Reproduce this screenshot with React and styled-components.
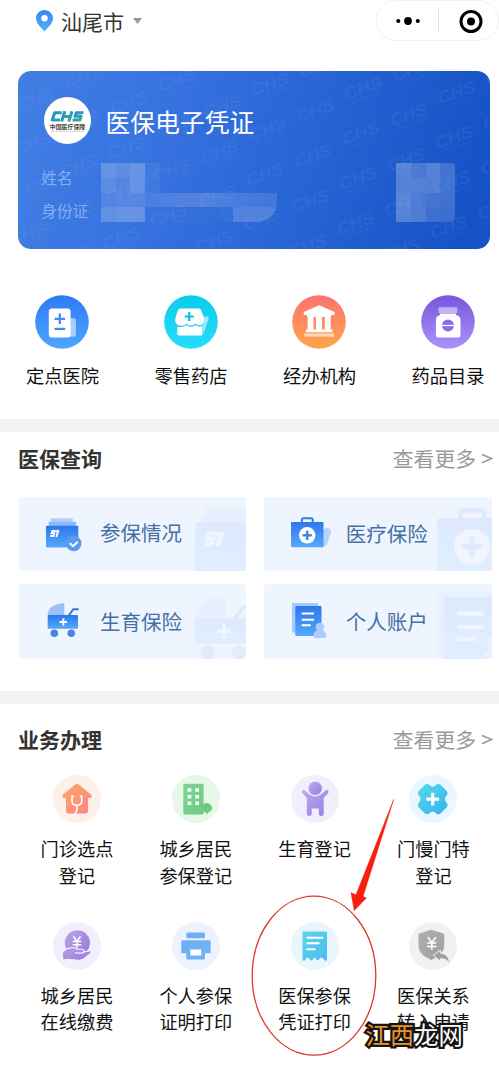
import React from 'react';
import styled, { createGlobalStyle } from 'styled-components';

const GlobalStyle = createGlobalStyle`
  * { box-sizing: border-box; }
  body {
    margin: 0;
    background: #fff;
    font-family: "Noto Sans CJK SC", "Liberation Sans", sans-serif;
    color: #111;
    overflow: hidden;
  }
  svg { display: block; }
`;

const Page = styled.main`
  position: relative;
  width: 499px;
  height: 1065px;
  background: #fff;
  overflow: hidden;
`;

const Header = styled.header`
  display: flex;
  justify-content: space-between;
  align-items: flex-start;
  height: 71px;
  padding-left: 36px;
`;

const Location = styled.div`
  display: flex;
  align-items: center;
  height: 42px;
  font-size: 21px;
  line-height: 42px;
  color: #333;
`;

const PlaceName = styled.span`
  margin: 0 9px 0 8px;
`;

const Capsule = styled.div`
  display: flex;
  align-items: center;
  width: 123px;
  height: 41px;
  border: 1px solid #f1f1f1;
  border-radius: 21px;
`;

const CapsuleHalf = styled.div`
  width: ${(p) => (p.$divided ? '60px' : '61px')};
  display: flex;
  justify-content: center;
  align-items: center;
  height: 24px;
  border-left: ${(p) => (p.$divided ? '1px solid #e2e2e2' : 'none')};
  padding-left: ${(p) => (p.$divided ? '5px' : '0')};
`;

const Card = styled.section`
  position: relative;
  display: flex;
  flex-direction: column;
  width: 472px;
  height: 178px;
  margin-left: 18px;
  padding: 26px 35px 0 23px;
  border-radius: 13px;
  overflow: hidden;
  background: linear-gradient(104deg, #427fe4 0%, #3873e0 30%, #2562d2 66%, #1451c5 100%);
  color: #fff;
`;

const CardPattern = styled.svg`
  position: absolute;
  inset: 0;
`;

const CardHead = styled.div`
  position: relative;
  display: flex;
  align-items: center;
  height: 47px;
  padding-left: 2.5px;
`;

const Emblem = styled.div`
  display: flex;
  flex-direction: column;
  align-items: center;
  justify-content: center;
  width: 47px;
  height: 47px;
  border-radius: 50%;
  background: #fff;
`;

const CardTitle = styled.h1`
  margin: 0 0 0 15px;
  font-size: 24.8px;
  font-weight: 400;
  line-height: 36px;
`;

const CardInfo = styled.div`
  position: relative;
  display: flex;
  margin-top: 19px;
  height: 60px;
`;

const Labels = styled.div`
  width: 60px;
  font-size: 15.8px;
  line-height: 32.6px;
  margin-top: -1px;
  color: rgba(180, 206, 255, 0.62);
`;

const Mosaic = styled.div`
  display: grid;
  grid-template-columns: repeat(${(p) => p.$cols}, 14.7px);
  grid-auto-rows: 14.75px;
  height: 59px;
  overflow: hidden;
  margin-left: ${(p) => (p.$right ? 'auto' : '0')};
  border-radius: ${(p) => (p.$right ? '0 3px 5px 0' : '0 0 20px 0')};
`;

const Cell = styled.i`
  background: rgba(190, 205, 235, ${(p) => p.$a / 100});
`;

const QuickRow = styled.nav`
  display: flex;
  margin: 45.5px 0 0 -1.8px;
  width: 514px;
  height: 124.5px;
`;

const QuickItem = styled.a`
  width: 128.5px;
  display: flex;
  flex-direction: column;
  align-items: center;
  font-size: 18.3px;
  line-height: 28px;
  color: #111;
`;

const QuickLabel = styled.span`
  margin-top: 12px;
  white-space: nowrap;
`;

const Gap = styled.div`
  height: 13px;
  background: #f3f3f3;
`;

const SectionHead = styled.div`
  display: flex;
  justify-content: space-between;
  align-items: center;
  height: ${(p) => p.$h}px;
  padding: 0 6px 2px 18px;
`;

const SectionTitle = styled.h2`
  margin: 0;
  font-size: 21px;
  line-height: 30px;
  font-weight: 700;
  color: #333;
`;

const More = styled.a`
  display: flex;
  align-items: center;
  gap: 5px;
  font-size: 20.8px;
  line-height: 30px;
  color: #999;
`;

const Tiles = styled.div`
  display: grid;
  grid-template-columns: 227.5px 227.5px;
  grid-auto-rows: 74.5px;
  gap: 13.3px 18.2px;
  margin: 10.5px 0 32.7px 18.5px;
`;

const Tile = styled.a`
  position: relative;
  display: flex;
  align-items: center;
  padding: 0 0 1px 25.5px;
  border-radius: 2px;
  background: #eff5ff;
  overflow: hidden;
  font-size: 20.5px;
  line-height: 30px;
  color: #4470a3;
`;

const TileLabel = styled.span`
  margin: 0 0 ${(p) => p.$lift}px 14px;
`;

const Ghost = styled.div`
  position: absolute;
  left: ${(p) => p.$x}px;
  top: ${(p) => p.$y}px;
  opacity: 0.085;
`;

const Services = styled.div`
  display: grid;
  grid-template-columns: repeat(4, 118.8px);
  grid-auto-rows: 146.5px;
  margin-left: 17.6px;
`;

const Service = styled.a`
  display: flex;
  flex-direction: column;
  align-items: center;
  font-size: 18.2px;
  line-height: 26.6px;
  text-align: center;
  white-space: pre-line;
  color: #111;
`;

const ServiceLabel = styled.span`
  margin-top: 11.7px;
`;

const Annotation = styled.svg`
  position: absolute;
  left: 0;
  top: 0;
  pointer-events: none;
`;

const SiteMark = styled.div`
  position: absolute;
  left: 365.5px;
  top: 1016px;
  font-size: 24.3px;
  line-height: 36px;
  font-weight: 400;
  white-space: nowrap;
  color: #fff;
  -webkit-text-stroke: 4.5px #141414;
  paint-order: stroke fill;
`;

const MarkAccent = styled.span`
  color: #ee9322;
`;

function Gradient({ id, from, to, diagonal }) {
  return (
    <linearGradient id={id} x1="0" y1="0" x2={diagonal ? 1 : 0} y2="1">
      <stop offset="0" stopColor={from} />
      <stop offset="1" stopColor={to} />
    </linearGradient>
  );
}

function PinIcon() {
  return (
    <svg width="17" height="22" viewBox="0 0 17 22">
      <defs><Gradient id="pin" from="#3a84f2" to="#54aefb" /></defs>
      <path fill="url(#pin)" fillRule="evenodd" d="M8.5 0C3.8 0 0 3.7 0 8.3c0 5 5.400 9.600 8.500 13.200C11.600 17.900 17 13.300 17 8.300 17 3.700 13.200 0 8.500 0Zm0 5a3.200 3.200 0 1 1 0 6.400 3.200 3.200 0 0 1 0-6.400Z" />
    </svg>
  );
}

function PatternText() {
  const marks = [];
  for (let row = -1; row < 9; row += 1) {
    for (let col = -4; col < 3; col += 1) {
      const x = 345 + col * 93.3 - (row % 2 !== 0 ? 46.5 : 0) - row * 1.3;
      const y = 17 + col * 4 + row * 22.5;
      if (x > -20 && x < 492 && y > -8 && y < 186) {
        marks.push(
          <g key={`${row}:${col}`} transform={`translate(${x} ${y}) rotate(-19)`}>
            <text textAnchor="middle" y="6" fontSize="17" textLength="39" lengthAdjust="spacingAndGlyphs" fontWeight="700" fontStyle="italic" fontFamily="Liberation Sans">CHS</text>
            <rect x="-16" y="9" width="33" height="2" opacity="0.5" />
          </g>
        );
      }
    }
  }
  return (
    <CardPattern width="472" height="178" aria-hidden="true">
      <g fill="#7fa2ec" opacity="0.11">{marks}</g>
    </CardPattern>
  );
}

function EmblemMark() {
  return (
    <svg width="47" height="47" viewBox="0 0 47 47">
      <defs><Gradient id="chs" from="#2590c8" to="#35a99b" diagonal /></defs>
      <g fill="none" stroke="url(#chs)" strokeWidth="3.100" strokeLinejoin="round">
        <path d="M17.800 15.800H10.700L8.300 23H16" />
        <path d="M20.800 14.200 17.600 24.500M28 14.200 24.800 24.500M18.500 19.500H26.500" />
        <path d="M39.500 15.700H32.500L31 19.300H37L35.800 23H28.600" />
      </g>
      <text x="23.500" y="32.300" textAnchor="middle" fontSize="5.900" fontWeight="700" fill="#4b4644">中国医疗保障</text>
      <path d="M7 34.500H40" stroke="#b6b3b0" strokeWidth="0.700" strokeDasharray="1.500 .6" />
    </svg>
  );
}

const quickArt = {
  hospital: {
    from: '#2c7bf6', to: '#4ea5ff',
    art: (
      <>
        <rect x="33" y="23.300" width="7.900" height="18.400" rx="2" fill="#fff" opacity="0.550" />
        <rect x="13.800" y="13.500" width="21.800" height="29" rx="3" fill="#fff" />
        <path d="M24.800 18.600V29M19.600 23.800H30M19.500 33.900H30.200" stroke="#3f8bf2" strokeWidth="2.300" />
      </>
    ),
  },
  pharmacy: {
    from: '#0bcbea', to: '#28dcfa',
    art: (
      <>
        <path d="M38 21.500h5.500q2 .3 1.200 2.300L39.500 38.500Z" fill="#fff" opacity="0.550" />
        <path d="M16.500 13.500H34.500Q36.800 13.500 37.500 15.700L39.800 23Q40.500 29.500 35.800 30.500 33.500 31 31.500 28.500 29.500 31 27 30.800 24.500 31 22.500 28.500 20.500 31 17.500 31 10.300 30.500 11.300 23.500L13.600 15.700Q14.300 13.500 16.500 13.500Z" fill="#fff" />
        <path d="M13.300 31.500Q18.500 33 22.500 29.800 27 33.500 31.500 29.800 34.500 32.500 38.500 30.800V38.800Q38.500 40.600 36.700 40.600H15.100Q13.300 40.600 13.300 38.800Z" fill="#fff" />
        <path d="M13 31Q18.800 32.600 22.500 29.300 27 33 31.500 29.300 34.500 32 38.300 30.300" fill="none" stroke="#2fd0ec" strokeWidth="1" />
        <path d="M25.200 17V26M20.700 21.500H29.700" stroke="#13bfdf" strokeWidth="2.200" />
      </>
    ),
  },
  agency: {
    from: '#fb7270', to: '#fea64b',
    art: (
      <g fill="#fff">
        <path d="M27.100 10.300 42.500 17V20H11.800V17Z" />
        <path d="M15.700 20H21.500V35H15.700ZM24 20H30V35H24ZM32.800 20H38.600V35H32.800ZM13.900 34.600H40.500V37.300H13.900ZM15 19.500H39.200V22H15Z" />
        <rect x="12.100" y="38.400" width="30" height="3.300" opacity="0.600" />
      </g>
    ),
  },
  drugs: {
    from: '#7657da', to: '#ad92fa',
    art: (
      <>
        <rect x="17.500" y="12.300" width="18.800" height="5.700" rx="1" fill="#fff" opacity="0.500" />
        <path d="M19 18.400H35V20Q39.500 21 39.500 25V40Q39.500 42.500 37 42.500H17.400Q14.900 42.500 14.900 40V25Q14.900 21 19 20Z" fill="#fff" />
        <circle cx="27" cy="30.500" r="6" fill="#8a6ce4" />
        <path d="M20.500 30.500H33.500" stroke="#fff" strokeWidth="1.300" />
      </>
    ),
  },
};

function QuickIcon({ name }) {
  const { from, to, art } = quickArt[name];
  return (
    <svg width="54" height="54" viewBox="0 0 54 54">
      <defs><Gradient id={`q-${name}`} from={from} to={to} /></defs>
      <circle cx="27" cy="27" r="26.800" fill={`url(#q-${name})`} />
      {art}
    </svg>
  );
}

const tileArt = {
  wallet: (big) => (
    <>
      <path d="M6.700 4.300H28.700V8H6.700Z" fill="#b2cdfb" />
      <path d="M4.700 7.700H32V12H4.700Z" fill="#8fb8f8" />
      <rect x="2" y="11.700" width="32.300" height={big ? 28 : 21.8} rx="0.800" fill="url(#tile)" />
      <path d="M11.300 17H8.300L7.600 19.300H10.300L9.500 22H6.200M14.500 16 12.300 23M11.500 17.300H15" fill="none" stroke="#fff" strokeWidth="1.900" />
      {!big && <circle cx="29.700" cy="29.500" r="7.800" fill="#5a9bf2" />}
      {!big && <path d="M25.900 29.300 29 32.200 33.700 27.700" fill="none" stroke="#fff" strokeWidth="2" />}
    </>
  ),
  kit: () => (
    <>
      <path d="M33 16 36.500 14Q41.500 14 41 18.500L37 30Q35.500 33.300 31 33Z" fill="#b7d2fc" />
      <path d="M11.900 9V5.800Q11.900 4.300 13.400 4.300H21.200Q22.700 4.300 22.700 5.800V9" fill="none" stroke="#2f7fdc" strokeWidth="2" />
      <rect x="1" y="8" width="32.500" height="25.200" rx="1.200" fill="url(#tile)" />
      <circle cx="17.200" cy="21.300" r="8.300" fill="#fff" />
      <path d="M17.200 16.700V25.900M12.600 21.300H21.800" stroke="#3d87e4" strokeWidth="2.500" />
    </>
  ),
  pram: () => (
    <>
      <path d="M20.300 1V13.300H3.700Q4.200 2 20.300 1Z" fill="#9cc0f8" />
      <path d="M24.800 13.500 29.300 7.200H34.700" fill="none" stroke="#3578ce" strokeWidth="2" />
      <rect x="3.700" y="13" width="30.300" height="13.800" rx="0.800" fill="url(#tile)" />
      <path d="M19.300 16.200V23.800M15.500 20H23.100" stroke="#fff" strokeWidth="2" />
      <circle cx="10.300" cy="31.300" r="3.800" fill="#4787dd" />
      <circle cx="27.300" cy="31.300" r="3.800" fill="#4787dd" />
    </>
  ),
  account: () => (
    <>
      <rect x="2" y="1" width="26.200" height="29.800" rx="1" fill="#a5c9f8" />
      <rect x="5.300" y="4" width="26.200" height="30" rx="1" fill="url(#tile)" />
      <path d="M11.700 11.500H24M11.700 17.700H24M11.700 23.200H20.700" stroke="#fff" strokeWidth="2" />
      <path d="M29.800 20.700a4.200 4.200 0 0 1 2.500 7.600Q36.500 29.700 36.300 34 36 36 34 36H25.500Q23.300 36 23.400 33.700 23.600 29.600 27.300 28.300A4.200 4.200 0 0 1 29.800 20.700Z" fill="#adcbfd" />
    </>
  ),
};

function TileIcon({ name, scale = 1 }) {
  return (
    <svg width={42 * scale} height={38 * scale} viewBox="0 0 42 38">
      <defs><Gradient id="tile" from="#2c77ee" to="#55a9fb" /></defs>
      {tileArt[name](scale > 1)}
    </svg>
  );
}

const yen = (x, y, s) => (
  <path
    d={`M${x - 3.6 * s} ${y - 5.500 * s}L${x} ${y - 0.5 * s}L${x + 3.6 * s} ${y - 5.500 * s}M${x} ${y - 0.5 * s}V${y + 6 * s}M${x - 4.300 * s} ${y - 0.2 * s}H${x + 4.300 * s}M${x - 4.300 * s} ${y + 3 * s}H${x + 4.300 * s}`}
    fill="none" stroke="#fff" strokeWidth={1.5 * s}
  />
);

const serviceArt = {
  clinic: {
    bg: '#fcf0e9', from: '#ffa763', to: '#fb8686',
    art: (fill) => (
      <>
        <path d="M22.200 9.500Q24 8 25.800 9.500L38.200 19.800Q39.500 22 37.400 23H35V36.300Q35 38.400 32.900 38.400H15.100Q13 38.400 13 36.300V23H10.600Q8.300 22 9.800 19.800Z" fill={fill} />
        <path d="M21 21.300H19V26Q19 30.300 23.800 30.300 28.700 30.300 28.700 26V21.300H26.700M23.900 30.300V33.500Q24.300 36 21.800 39" fill="none" stroke="#fff" strokeWidth="1.600" />
      </>
    ),
  },
  residents: {
    bg: '#e6f8e8', from: '#7bd894', to: '#6fc981',
    art: (fill) => (
      <>
        <rect x="11.300" y="8.700" width="20.300" height="30.700" rx="0.800" fill={fill} />
        <path d="M15.600 13.300h3.700v3.500h-3.700ZM23.300 13.300h3.700v3.500h-3.700ZM15.600 19.900h3.700v3.500h-3.700ZM23.300 19.900h3.700v3.500h-3.700ZM15.600 26.500h3.700v3.500h-3.700ZM23.300 26.500h3.700v3.500h-3.700Z" fill="#fff" />
        <path d="M34.500 28Q38 27.500 39 30.500 41.500 33 39 35.500 38 37.500 36 37.300L35 39.700 33.800 37.300 31 36.500V29.500Q32.500 28 34.500 28Z" fill="#6cc97e" />
      </>
    ),
  },
  birth: {
    bg: '#f2effd', from: '#beaaf5', to: '#977fdc',
    art: (fill) => (
      <>
        <path d="M11 17.500Q10.500 14.500 13.700 15.200L18.500 19.500Q24.200 23.300 29.900 19.500L34.800 15.200Q38.300 14.500 37.300 18L32.700 23V38.800Q32.700 41 30.200 41 27.800 41 27.800 38.800V33.500H20.700V38.800Q20.700 41 18.300 41 15.800 41 15.800 38.800V23Z" fill={fill} />
        <circle cx="24.200" cy="13.400" r="7.200" fill={fill} stroke="#f2effd" strokeWidth="1" />
      </>
    ),
  },
  chronic: {
    bg: '#e8f8fe', from: '#55dbe5', to: '#35b3f3',
    art: (fill) => (
      <>
        <path d="M20.500 10Q23.700 13.500 26.900 10 29 8.300 31.500 9.700L37.800 16Q39.500 18.300 37.500 20.500 34.500 24.100 37.500 27.700 39.500 29.900 37.800 32.200L31.500 38.500Q29 39.900 26.900 38.200 23.700 34.700 20.500 38.200 18.400 39.900 15.900 38.500L9.600 32.200Q7.900 29.900 9.900 27.700 12.900 24.100 9.900 20.500 7.900 18.300 9.600 16L15.900 9.700Q18.400 8.300 20.500 10Z" fill={fill} />
        <path d="M23.700 17.700V30.500M17.300 24.100H30.100" stroke="#fff" strokeWidth="3.200" />
      </>
    ),
  },
  payment: {
    bg: '#f1effd', from: '#bda4ec', to: '#9179d8',
    art: (fill) => (
      <>
        <circle cx="24.400" cy="20.800" r="12.600" fill={fill} />
        {yen(24, 19.7, 1)}
        <path d="M9 31Q12 26 18.500 25.600 22 25.300 25 27.200H29Q31.500 27.500 31 30L37 28.600Q38.900 29 37.500 31.300L32 36Q29.500 38.400 26 38.200L15 37.200 10 38Z" fill={fill} stroke="#f7f3ff" strokeWidth="1.100" />
        <path d="M22 30.800 29.500 31.200 31 29.500" fill="none" stroke="#f7f3ff" strokeWidth="1.200" />
      </>
    ),
  },
  printer: {
    bg: '#edf3fe', from: '#6dadf4', to: '#74b0f6',
    art: (fill) => (
      <>
        <path d="M15.800 10.400H31.500Q33 10.400 33 11.900V14.700Q33 16.200 31.500 16.200H15.800Q14.300 16.200 14.300 14.700V11.900Q14.300 10.400 15.800 10.400ZM10.300 18.200H37.600Q38.600 18.200 38.600 19.200V30.200Q38.600 31.200 37.600 31.200H33V36.600Q33 37.600 32 37.600H15.300Q14.300 37.600 14.300 36.600V31.200H10.300Q9.300 31.200 9.300 30.200V19.200Q9.300 18.200 10.300 18.200Z" fill={fill} />
        <rect x="18.300" y="27.500" width="11" height="6" fill="#fff" />
      </>
    ),
  },
  receipt: {
    bg: '#e8f7fe', from: '#5fd5ee', to: '#4bbcec',
    art: (fill) => (
      <>
        <path d="M12.300 9.500H35Q36 9.500 36 10.500V38.500H33.500Q32 35.500 30 35.500 28.500 35.700 27.600 38.500 25.500 38.500 24.800 36.500 23.700 34.800 22.500 36.500 21.500 38.700 19.500 38.500 18 35.500 16.500 35.500 15 35.600 14 38.500H11.500V10.500Q11.500 9.500 12.300 9.500Z" fill={fill} />
        <path d="M15.500 15.800H32.300M15.500 21.300H28.500M15.500 27.200H24.500" stroke="#fff" strokeWidth="1.900" />
      </>
    ),
  },
  transfer: {
    bg: '#f1f1f1', from: '#b0b0b0', to: '#9f9f9f',
    art: (fill) => (
      <>
        <path d="M22.300 7.700 34.500 11.500Q35.200 11.800 35.200 12.500V24Q35 32.500 22.300 38 9.600 32.500 9.500 24V12.500Q9.500 11.800 10.200 11.500Z" fill={fill} />
        {yen(22.8, 21.2, 1.1)}
        <path d="M24.300 33.300 31.300 28V31Q39.500 31.300 40.700 41 37 36.300 31.300 36.700V39.500Z" fill="#a2a2a2" stroke="#f3f3f3" strokeWidth="1" />
      </>
    ),
  },
};

function ServiceIcon({ name }) {
  const { bg, from, to, art } = serviceArt[name];
  return (
    <svg width="48" height="48" viewBox="0 0 48 48">
      <defs><Gradient id={`s-${name}`} from={from} to={to} diagonal /></defs>
      <circle cx="24" cy="24" r="24" fill={bg} />
      {art(`url(#s-${name})`)}
    </svg>
  );
}

const quickLinks = [
  ['hospital', '定点医院'],
  ['pharmacy', '零售药店'],
  ['agency', '经办机构'],
  ['drugs', '药品目录'],
];

const tiles = [
  { icon: 'wallet', label: '参保情况', x: 172.5, y: 0, scale: 2.15, lift: 2 },
  { icon: 'kit', label: '医疗保险', x: 170.5, y: 4.5, scale: 2.15, lift: 1 },
  { icon: 'pram', label: '生育保险', x: 169, y: 10, scale: 1.87, lift: 0 },
  { icon: 'account', label: '个人账户', x: 167.5, y: 4.5, scale: 2.15, lift: 0 },
];

const services = [
  ['clinic', '门诊选点\n登记'],
  ['residents', '城乡居民\n参保登记'],
  ['birth', '生育登记'],
  ['chronic', '门慢门特\n登记'],
  ['payment', '城乡居民\n在线缴费'],
  ['printer', '个人参保\n证明打印'],
  ['receipt', '医保参保\n凭证打印'],
  ['transfer', '医保关系\n转入申请'],
];

const nameCells = [
  34, 28, 36, 8, 0, 0, 0, 0, 0, 0, 0, 0,
  26, 19, 34, 8, 0, 0, 0, 0, 0, 0, 0, 0,
  17, 21, 22, 16, 19, 22, 23, 22, 20, 19, 18, 17,
  31, 35, 36, 3, 2, 2, 2, 2, 5, 27, 26, 25,
];

const photoCells = [
  36, 28, 36, 25,
  34, 34, 34, 24,
  38, 29, 26, 24,
  36, 31, 22, 21,
];

function SectionHeader({ title, height }) {
  return (
    <SectionHead $h={height}>
      <SectionTitle>{title}</SectionTitle>
      <More>
        <span>查看更多</span>
        <svg width="12" height="12" viewBox="0 0 12 12">
          <path d="M1 2.500 10.500 6.500 1 10.700" fill="none" stroke="#999" strokeWidth="1.500" />
        </svg>
      </More>
    </SectionHead>
  );
}

export default function App() {
  return (
    <Page>
      <GlobalStyle />
      <Header>
        <Location>
          <PinIcon />
          <PlaceName>汕尾市</PlaceName>
          <svg width="9" height="6" viewBox="0 0 9 6"><path d="M0 0H9L4.500 6Z" fill="#999" /></svg>
        </Location>
        <Capsule>
          <CapsuleHalf>
            <svg width="26" height="10" viewBox="0 0 26 10">
              <circle cx="3.300" cy="5" r="2.100" />
              <circle cx="13" cy="5" r="3.900" />
              <circle cx="22.800" cy="5" r="2.100" />
            </svg>
          </CapsuleHalf>
          <CapsuleHalf $divided>
            <svg width="24" height="24" viewBox="0 0 24 24">
              <circle cx="12" cy="12.500" r="10" fill="none" stroke="#000" strokeWidth="3" />
              <circle cx="12" cy="12.500" r="4" />
            </svg>
          </CapsuleHalf>
        </Capsule>
      </Header>

      <Card>
        <PatternText />
        <CardHead>
          <Emblem><EmblemMark /></Emblem>
          <CardTitle>医保电子凭证</CardTitle>
        </CardHead>
        <CardInfo>
          <Labels>
            <div>姓名</div>
            <div>身份证</div>
          </Labels>
          <Mosaic $cols={12}>{nameCells.map((a, i) => <Cell key={i} $a={a} />)}</Mosaic>
          <Mosaic $cols={4} $right>{photoCells.map((a, i) => <Cell key={i} $a={a} />)}</Mosaic>
        </CardInfo>
      </Card>

      <QuickRow>
        {quickLinks.map(([icon, label]) => (
          <QuickItem key={icon}>
            <QuickIcon name={icon} />
            <QuickLabel>{label}</QuickLabel>
          </QuickItem>
        ))}
      </QuickRow>

      <Gap />
      <SectionHeader title="医保查询" height={54} />
      <Tiles>
        {tiles.map((t) => (
          <Tile key={t.icon}>
            <Ghost $x={t.x} $y={t.y}><TileIcon name={t.icon} scale={t.scale} /></Ghost>
            <TileIcon name={t.icon} />
            <TileLabel $lift={t.lift}>{t.label}</TileLabel>
          </Tile>
        ))}
      </Tiles>

      <Gap />
      <SectionHeader title="业务办理" height={71} />
      <Services>
        {services.map(([icon, label]) => (
          <Service key={icon}>
            <ServiceIcon name={icon} />
            <ServiceLabel>{label}</ServiceLabel>
          </Service>
        ))}
      </Services>

      <Annotation width="499" height="1065">
        <ellipse cx="314" cy="975.700" rx="61.800" ry="79.500" fill="none" stroke="#dc382c" strokeWidth="1.300" />
        <path d="M393.700 799.500 363 896.500 366.300 898 354.300 910.500 351 892.700 356 894.800Z" fill="#fb1d0e" stroke="#e3200f" strokeWidth="0.500" />
      </Annotation>
      <SiteMark><MarkAccent>江西</MarkAccent>龙网</SiteMark>
    </Page>
  );
}
